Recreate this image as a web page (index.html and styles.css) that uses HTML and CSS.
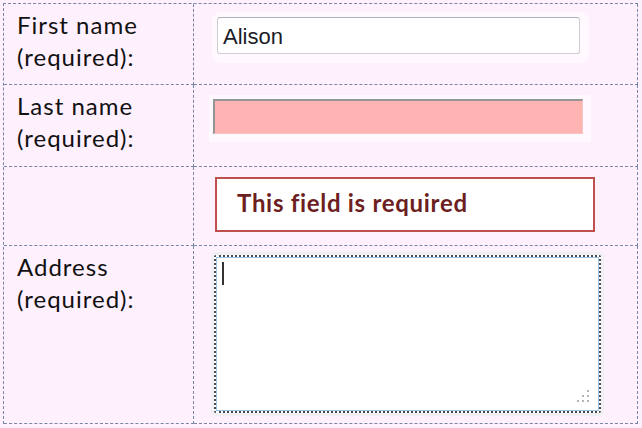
FILE: index.html
```html
<!DOCTYPE html>
<html lang="en">
<head>
<meta charset="utf-8">
<title>Form validation</title>
<link rel="stylesheet" href="styles.css">
</head>
<body>
<div class="form-grid">
  <div class="cell label-cell"><label class="label">First name<br>(required):</label></div>
  <div class="cell field-cell"><input class="text-input first" type="text" value="Alison"></div>

  <div class="cell label-cell"><label class="label">Last name<br>(required):</label></div>
  <div class="cell field-cell"><div class="text-input invalid"></div></div>

  <div class="cell label-cell"></div>
  <div class="cell field-cell"><div class="error-box">This field is required</div></div>

  <div class="cell label-cell"><label class="label">Address<br>(required):</label></div>
  <div class="cell field-cell">
    <div class="textarea">
      <span class="caret"></span>
      <svg class="grip" width="14" height="14" viewBox="0 0 14 14">
        <rect x="11" y="1" width="2" height="2" fill="#b4b4b8"/>
        <rect x="6" y="6" width="2" height="2" fill="#b4b4b8"/>
        <rect x="11" y="6" width="2" height="2" fill="#b4b4b8"/>
        <rect x="1" y="11" width="2" height="2" fill="#b4b4b8"/>
        <rect x="6" y="11" width="2" height="2" fill="#b4b4b8"/>
        <rect x="11" y="11" width="2" height="2" fill="#b4b4b8"/>
      </svg>
    </div>
  </div>
</div>
</body>
</html>
```
FILE: styles.css
```css
html, body {
  margin: 0;
  padding: 0;
  background: #fef0fd;
}

body {
  padding: 3px;
  font-family: Lato, "Open Sans", sans-serif;
}

.form-grid {
  display: grid;
  grid-template-columns: 190px 444px;
  grid-template-rows: 81px 82px 79px 178px;
  border-left: 1px dashed #7686a6;
  border-top: 1px dashed #7686a6;
  width: 634px;
}

.cell {
  box-sizing: border-box;
  border-right: 1px dashed #7686a6;
  border-bottom: 1px dashed #7686a6;
}

.label-cell {
  padding: 5px 0 0 13px;
}

.label {
  display: block;
  font-size: 24px;
  line-height: 32px;
  letter-spacing: 1px;
  color: #111;
}

.field-cell {
  padding-left: 19px;
}

.text-input {
  box-sizing: border-box;
  display: block;
}

.first {
  margin: 13px 0 0 4px;
  width: 363px;
  height: 37px;
  padding: 2px 5px 0;
  border: 1px solid #cdcdd2;
  border-top-color: #b0b0b6;
  border-radius: 3px;
  background: #fff;
  font-family: "Liberation Sans", Arial, sans-serif;
  font-size: 22px;
  color: #1c1c28;
  box-shadow: 2px 2px 0 7px rgba(255, 255, 255, 0.5);
  outline: none;
}

.invalid {
  margin-top: 14px;
  width: 370px;
  height: 35px;
  background: #ffb4b4;
  border-top: 2px solid #959595;
  border-left: 2px solid #959595;
  border-right: 1px solid #f7c4c4;
  border-bottom: 1px solid #f7c4c4;
  box-shadow: 2px 2px 0 6px rgba(255, 255, 255, 0.5);
}

.error-box {
  box-sizing: border-box;
  margin: 10px 0 0 2px;
  width: 380px;
  height: 55px;
  padding: 9px 0 0 20px;
  border: 2px solid #c0504d;
  background: #fff;
  color: #6d1f1f;
  font-weight: 700;
  font-size: 24px;
  line-height: 29px;
  letter-spacing: 0.7px;
}

.textarea {
  position: relative;
  box-sizing: border-box;
  margin: 9px 0 0 1px;
  width: 387px;
  height: 158px;
  background: #fff;
  border: 2px dotted #4a4a4e;
  border-radius: 2px;
  box-shadow: inset 0 0 0 1px #9cc6e8, 0 0 0 3px #f0eff3;
}

.caret {
  position: absolute;
  left: 6px;
  top: 5px;
  width: 2px;
  height: 23px;
  background: #333;
}

.grip {
  position: absolute;
  right: 9px;
  bottom: 8px;
}
```
